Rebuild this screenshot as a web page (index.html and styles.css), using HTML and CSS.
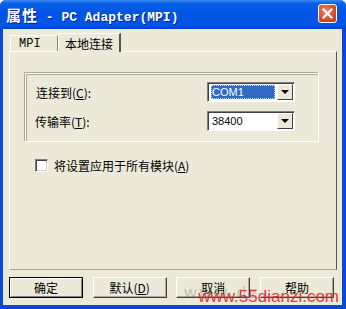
FILE: index.html
```html
<!DOCTYPE html>
<html lang="zh-CN">
<head>
    <meta charset="UTF-8">
    <title>属性 - PC Adapter(MPI)</title>
    <link rel="stylesheet" href="styles.css">
</head>
<body>
    <div class="window">
        <div class="titlebar">
            <span class="title"><span class="title-cjk">属性</span> - PC Adapter(MPI)</span>
            <span class="close">
                <svg width="11" height="11" viewBox="0 0 11 11">
                    <path d="M1.5 1.5 L9.5 9.5 M9.5 1.5 L1.5 9.5" stroke="#fff" stroke-width="2.2" stroke-linecap="square"/>
                </svg>
            </span>
        </div>
        <div class="client">
            <div class="tabs">
                <div class="tab">MPI</div>
                <div class="tab active">本地连接</div>
            </div>
            <div class="panel">
                <div class="group">
                    <div class="row">
                        <span class="label label-first">连接到(<u>C</u>):</span>
                        <div class="combo">
                            <span class="value selected">COM1</span>
                            <span class="arrow"></span>
                        </div>
                    </div>
                    <div class="row">
                        <span class="label">传输率(<u>T</u>):</span>
                        <div class="combo">
                            <span class="value">38400</span>
                            <span class="arrow"></span>
                        </div>
                    </div>
                </div>
                <label class="check">
                    <span class="box"></span>
                    <span>将设置应用于所有模块(<u>A</u>)</span>
                </label>
            </div>
            <div class="buttons">
                <button class="button default">确定</button>
                <button class="button">默认(<u>D</u>)</button>
                <button class="button">取消</button>
                <button class="button">帮助</button>
            </div>
            <div class="watermark"><span class="ghost">www.dz</span>www.55dianzi.com</div>
        </div>
    </div>
</body>
</html>
```

FILE: styles.css
```css
body {
    margin: 0;
    background: #fff;
    font-family: "Noto Sans CJK SC", sans-serif;
    font-size: 12px;
}
.window {
    width: 346px;
    height: 309px;
    display: flex;
    flex-direction: column;
    background: #0848d8;
    border-radius: 6px 6px 0 0;
    overflow: hidden;
}
.titlebar {
    height: 29px;
    display: flex;
    align-items: center;
    justify-content: space-between;
    padding: 0 9px 0 6px;
    background: linear-gradient(#3d8bf6 0%, #0a5fe8 12%, #0054e3 45%, #0156e8 85%, #0244c8 100%);
}
.title {
    color: #fff;
    font-family: "Liberation Mono", "Noto Sans CJK SC", monospace;
    font-weight: bold;
    font-size: 13px;
    text-shadow: 1px 1px 0 #0a1e7a;
}
.title-cjk {
    font-family: "Noto Sans CJK SC", sans-serif;
    font-size: 15px;
    letter-spacing: 1px;
}
.close {
    width: 19px;
    height: 19px;
    border: 1px solid #fff;
    border-radius: 3px;
    background: radial-gradient(circle at 40% 35%, #e8866a, #d1441f 70%, #b83a1a);
    display: flex;
    align-items: center;
    justify-content: center;
    box-sizing: border-box;
    margin-top: -2px;
}
.client {
    flex: 1;
    margin: 0 4px 4px 3px;
    background: #ece9d8;
    padding: 3px 5px 0 6px;
    position: relative;
}
.tabs {
    display: flex;
    align-items: flex-end;
    height: 19px;
    padding-left: 1px;
}
.tab {
    height: 16px;
    padding: 0 8px;
    display: flex;
    align-items: center;
    border-left: 1px solid #fff;
    border-top: 1px solid #fff;
    border-right: 1px solid #808080;
    box-sizing: border-box;
    font-family: "Liberation Mono", monospace;
    font-size: 12px;
    width: 48px;
}
.tab.active {
    height: 19px;
    width: 63px;
    font-family: "Noto Sans CJK SC", sans-serif;
    font-size: 12px;
    padding: 0 6px;
    border-right: 2px solid #555;
    margin-bottom: -1px;
    background: #ece9d8;
    position: relative;
    z-index: 1;
}
.panel {
    height: 219px;
    border-top: 1px solid #fff;
    border-left: 1px solid #fff;
    border-right: 1px solid #555;
    border-bottom: 1px solid #aca899;
    box-sizing: border-box;
    padding: 21px 17px 0 14px;
}
.group {
    height: 69px;
    border: 1px solid #fff;
    box-shadow: inset 1px 1px 0 #aca899, -1px -1px 0 #aca899;
    box-sizing: border-box;
    padding: 8px 23px 0 9px;
    margin-left: 1px;
}
.row {
    display: flex;
    align-items: center;
    justify-content: space-between;
    height: 20px;
    margin-bottom: 9px;
}
.label-first {
    padding-left: 1px;
}
.combo {
    width: 88px;
    height: 20px;
    background: #fff;
    border-top: 1px solid #808080;
    border-left: 1px solid #808080;
    border-right: 1px solid #fff;
    border-bottom: 1px solid #fff;
    box-shadow: inset 1px 1px 0 #404040;
    box-sizing: border-box;
    display: flex;
    padding: 2px 2px 2px 3px;
}
.value {
    flex: 1;
    font-family: "Liberation Sans", sans-serif;
    font-size: 11px;
    line-height: 14px;
    padding-left: 1px;
}
.value.selected {
    background: #316ac5;
    color: #fff;
    outline: 1px dotted #c8d8f0;
    outline-offset: -1px;
    margin-right: 2px;
}
.arrow {
    width: 16px;
    height: 16px;
    margin: -1px -1px 0 0;
    background: #ece9d8;
    border-top: 1px solid #fff;
    border-left: 1px solid #fff;
    border-right: 1px solid #404040;
    border-bottom: 1px solid #404040;
    box-sizing: border-box;
    display: flex;
    align-items: center;
    justify-content: center;
}
.arrow::after {
    content: "";
    border-left: 4px solid transparent;
    border-right: 4px solid transparent;
    border-top: 4px solid #000;
}
.check {
    display: flex;
    align-items: center;
    gap: 6px;
    margin: 15px 0 0 11px;
}
.box {
    width: 13px;
    height: 13px;
    background: #fff;
    border-top: 1px solid #808080;
    border-left: 1px solid #808080;
    border-right: 1px solid #fff;
    border-bottom: 1px solid #fff;
    box-shadow: inset 1px 1px 0 #404040, inset -1px -1px 0 #d4d0c8;
    box-sizing: border-box;
}
.buttons {
    display: flex;
    justify-content: space-between;
    margin-top: 7px;
    padding-right: 3px;
}
.button {
    width: 74px;
    height: 21px;
    background: #ece9d8;
    border-top: 1px solid #fff;
    border-left: 1px solid #fff;
    border-right: 1px solid #404040;
    border-bottom: 1px solid #404040;
    box-shadow: inset -1px -1px 0 #aca899;
    font-family: "Noto Sans CJK SC", sans-serif;
    font-size: 12px;
    padding: 0;
    color: #000;
}
.button.default {
    border: 1px solid #000;
    box-shadow: inset 1px 1px 0 #fff, inset -1px -1px 0 #808080;
}
.watermark {
    position: absolute;
    right: 3px;
    bottom: 0;
    color: #e8262a;
    font-family: "Liberation Sans", sans-serif;
    font-size: 17px;
    line-height: 16px;
    opacity: 0.9;
}
.ghost {
    position: absolute;
    left: -14px;
    top: -4px;
    color: rgba(90, 90, 90, 0.35);
    letter-spacing: 3px;
}
```
